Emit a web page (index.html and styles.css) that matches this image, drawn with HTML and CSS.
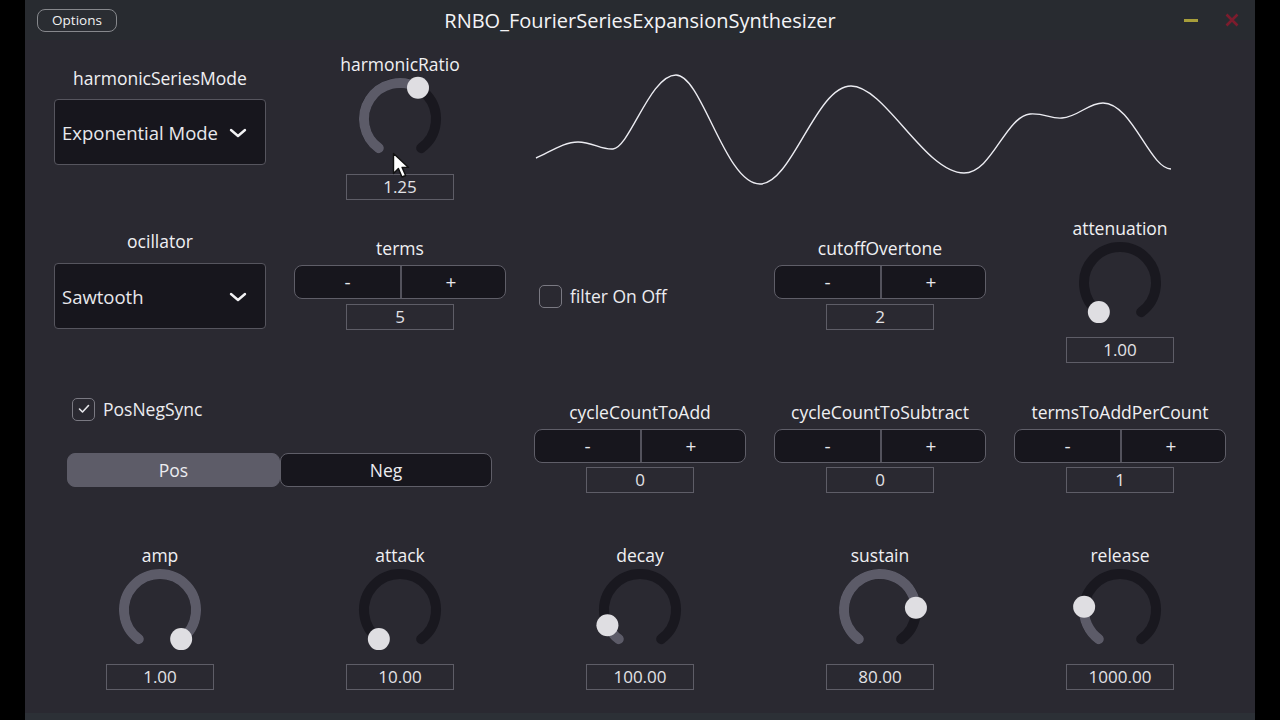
FILE: index.html
```html
<!DOCTYPE html>
<html lang="en">
<head>
  <meta charset="utf-8">
  <title>RNBO_FourierSeriesExpansionSynthesizer</title>
  <link rel="stylesheet" href="styles.css">
</head>
<body>
  <div class="window">
    <div class="titlebar">
      <button class="options">Options</button>
      <div class="title">RNBO_FourierSeriesExpansionSynthesizer</div>
      <div class="winctl">
        <span class="min"></span>
        <svg class="close" width="14" height="14" viewBox="0 0 14 14"><path d="M1.5 1.5 L12.5 12.5 M12.5 1.5 L1.5 12.5" stroke="#7c1c2d" stroke-width="2.6"/></svg>
      </div>
    </div>

    <div class="patch">
      <!-- row 1 -->
      <div class="cell r1-mode">
        <div class="label">harmonicSeriesMode</div>
        <div class="menu">
          <span>Exponential Mode</span>
          <svg width="18" height="10" viewBox="0 0 18 10"><path d="M2 2 L9 8 L16 2" fill="none" stroke="#f2f2f4" stroke-width="2.4" stroke-linecap="round" stroke-linejoin="round"/></svg>
        </div>
      </div>
      <div class="cell r1-knob">
        <div class="label">harmonicRatio</div>
        <svg class="knob" width="84" height="84" viewBox="0 0 84 84">
          <path class="track" d="M20.84 71.12 A36 36 0 1 1 63.16 71.12"/>
          <path class="fill" d="M20.84 71.12 A36 36 0 0 1 60 10.82"/>
          <circle class="thumb" cx="60" cy="10.82" r="11"/>
        </svg>
        <div class="num">1.25</div>
      </div>
      <div class="cell scope">
        <svg width="720" height="170" viewBox="0 0 720 170">
          <path d="M16 118 C30 112 44 102 58 102 C72 102 82 110 93 109 C110 107 130 35 156 35 C182 35 205 144 240 144 C272 144 296 46 331 46 C365 46 405 133 444 133 C472 133 485 77 510 74 C525 73 530 79 542 78 C558 77 568 63 583 63 C612 63 630 129 651 129"
                fill="none" stroke="#ececf2" stroke-width="1.4"/>
        </svg>
      </div>

      <!-- row 2 -->
      <div class="cell r2-menu">
        <div class="label">ocillator</div>
        <div class="menu">
          <span>Sawtooth</span>
          <svg width="18" height="10" viewBox="0 0 18 10"><path d="M2 2 L9 8 L16 2" fill="none" stroke="#f2f2f4" stroke-width="2.4" stroke-linecap="round" stroke-linejoin="round"/></svg>
        </div>
      </div>
      <div class="cell r2-step">
        <div class="label">terms</div>
        <div class="stepper"><span>-</span><span>+</span></div>
        <div class="num">5</div>
      </div>
      <div class="cell r2-toggle">
        <span class="box"></span>
        <span class="toggle-text">filter On Off</span>
      </div>
      <div class="cell r2-step">
        <div class="label">cutoffOvertone</div>
        <div class="stepper"><span>-</span><span>+</span></div>
        <div class="num">2</div>
      </div>
      <div class="cell r2-knob">
        <div class="label">attenuation</div>
        <svg class="knob" width="84" height="84" viewBox="0 0 84 84">
          <path class="track" d="M20.84 71.12 A36 36 0 1 1 63.16 71.12"/>
          <circle class="thumb" cx="20.84" cy="71.12" r="11"/>
        </svg>
        <div class="num">1.00</div>
      </div>

      <!-- row 3 -->
      <div class="cell r3-sync">
        <div class="sync">
          <span class="box checked">
            <svg width="12" height="10" viewBox="0 0 12 10"><path d="M1.5 5 L4.5 8 L10.5 1.5" fill="none" stroke="#e6e6ea" stroke-width="1.6" stroke-linecap="round" stroke-linejoin="round"/></svg>
          </span>
          <span class="toggle-text">PosNegSync</span>
        </div>
        <div class="segment">
          <span class="on">Pos</span>
          <span>Neg</span>
        </div>
      </div>
      <div class="cell r3-step">
        <div class="label">cycleCountToAdd</div>
        <div class="stepper"><span>-</span><span>+</span></div>
        <div class="num">0</div>
      </div>
      <div class="cell r3-step">
        <div class="label">cycleCountToSubtract</div>
        <div class="stepper"><span>-</span><span>+</span></div>
        <div class="num">0</div>
      </div>
      <div class="cell r3-step">
        <div class="label">termsToAddPerCount</div>
        <div class="stepper"><span>-</span><span>+</span></div>
        <div class="num">1</div>
      </div>

      <!-- row 4 : envelope -->
      <div class="cell r4-knob">
        <div class="label">amp</div>
        <svg class="knob" width="84" height="84" viewBox="0 0 84 84">
          <path class="track" d="M20.84 71.12 A36 36 0 1 1 63.16 71.12"/>
          <path class="fill" d="M20.84 71.12 A36 36 0 1 1 63.16 71.12"/>
          <circle class="thumb" cx="63.16" cy="71.12" r="11"/>
        </svg>
        <div class="num">1.00</div>
      </div>
      <div class="cell r4-knob">
        <div class="label">attack</div>
        <svg class="knob" width="84" height="84" viewBox="0 0 84 84">
          <path class="track" d="M20.84 71.12 A36 36 0 1 1 63.16 71.12"/>
          <circle class="thumb" cx="20.84" cy="71.12" r="11"/>
        </svg>
        <div class="num">10.00</div>
      </div>
      <div class="cell r4-knob">
        <div class="label">decay</div>
        <svg class="knob" width="84" height="84" viewBox="0 0 84 84">
          <path class="track" d="M20.84 71.12 A36 36 0 1 1 63.16 71.12"/>
          <path class="fill" d="M20.84 71.12 A36 36 0 0 1 9.43 57.33"/>
          <circle class="thumb" cx="9.43" cy="57.33" r="11"/>
        </svg>
        <div class="num">100.00</div>
      </div>
      <div class="cell r4-knob">
        <div class="label">sustain</div>
        <svg class="knob" width="84" height="84" viewBox="0 0 84 84">
          <path class="track" d="M20.84 71.12 A36 36 0 1 1 63.16 71.12"/>
          <path class="fill" d="M20.84 71.12 A36 36 0 1 1 77.93 39.74"/>
          <circle class="thumb" cx="77.93" cy="39.74" r="11"/>
        </svg>
        <div class="num">80.00</div>
      </div>
      <div class="cell r4-knob">
        <div class="label">release</div>
        <svg class="knob" width="84" height="84" viewBox="0 0 84 84">
          <path class="track" d="M20.84 71.12 A36 36 0 1 1 63.16 71.12"/>
          <path class="fill" d="M20.84 71.12 A36 36 0 0 1 6.14 38.84"/>
          <circle class="thumb" cx="6.14" cy="38.84" r="11"/>
        </svg>
        <div class="num">1000.00</div>
      </div>
    </div>
    <div class="footer"></div>
  </div>

  <!-- mouse pointer over the harmonicRatio knob -->
  <svg class="pointer" width="18" height="28" viewBox="0 0 18 28"><path d="M1.5 1.5 L1.5 21.5 L6.4 16.6 L10 25 L13.6 23.5 L10.1 15.4 L16.5 15.4 Z" fill="#ffffff" stroke="#111" stroke-width="1.4" stroke-linejoin="round"/></svg>
</body>
</html>
```

FILE: styles.css
```css
body {
  margin: 0;
  background: #000000;
  font-family: "Open Sans", Lato, "Liberation Sans", sans-serif;
  color: #ededf1;
}
.window {
  position: relative;
  margin-left: 25px;
  width: 1230px;
  height: 720px;
  background: #2a2931;
  display: flex;
  flex-direction: column;
}

/* title bar */
.titlebar {
  height: 40px;
  flex: none;
  background: #282b30;
  display: grid;
  grid-template-columns: 1fr auto 1fr;
  align-items: center;
}
.options {
  justify-self: start;
  margin-left: 12px;
  width: 80px;
  height: 23px;
  padding: 0;
  border: 1px solid #86888c;
  border-radius: 8px;
  background: #2a2d32;
  color: #f2f2f2;
  font-family: "Open Sans", Lato, sans-serif;
  font-size: 13.5px;
  font-weight: 500;
}
.title {
  font-size: 20px;
  font-weight: 500;
  color: #f4f4f6;
}
.winctl {
  justify-self: end;
  margin-right: 16px;
  display: flex;
  align-items: center;
  gap: 27px;
}
.winctl .min {
  display: block;
  width: 14px;
  height: 3px;
  margin-top: 1px;
  background: #a79e3a;
}

/* main grid */
.patch {
  flex: 1;
  display: grid;
  grid-template-columns: repeat(5, 240px);
  grid-template-rows: 170px 165px 155px 1fr;
  padding-left: 15px;
}
.cell {
  display: flex;
  flex-direction: column;
  align-items: center;
}
.label {
  font-size: 17.5px;
  font-weight: 500;
  line-height: 20px;
  color: #f0f0f3;
  white-space: nowrap;
}
.num {
  box-sizing: border-box;
  width: 108px;
  height: 26px;
  border: 1px solid #5e5d67;
  font-size: 17px;
  line-height: 24px;
  text-align: center;
  color: #e2e2e6;
}
.knob {
  margin-top: 3px;
  display: block;
  overflow: visible;
}
.knob + .num {
  margin-top: 12px;
}
.knob .track, .knob .fill {
  fill: none;
  stroke-width: 10;
  stroke-linecap: round;
}
.knob .track { stroke: #19181f; }
.knob .fill { stroke: #5c5b68; }
.knob .thumb { fill: #dfdee2; }

.menu {
  box-sizing: border-box;
  width: 212px;
  height: 66px;
  margin-top: 12px;
  padding: 0 18px 0 7px;
  background: #17161d;
  border: 1px solid #56555e;
  border-radius: 4px;
  display: flex;
  align-items: center;
  justify-content: space-between;
  font-size: 18.5px;
  color: #e8e8ec;
}
.menu svg { margin-top: 2px; }

.stepper {
  box-sizing: border-box;
  width: 212px;
  height: 34px;
  margin-top: 7px;
  border: 1px solid #5f5e68;
  border-radius: 8px;
  background: #17161d;
  display: grid;
  grid-template-columns: 1fr 1fr;
  overflow: hidden;
}
.stepper span {
  display: flex;
  align-items: center;
  justify-content: center;
  font-size: 19px;
  color: #e8e8ec;
}
.stepper span + span {
  border-left: 2px solid #53525c;
  padding-right: 5px;
}
.stepper + .num {
  margin-top: 4px;
}

.box {
  box-sizing: border-box;
  width: 23px;
  height: 23px;
  border: 1.5px solid #7a7982;
  border-radius: 5px;
  display: flex;
  align-items: center;
  justify-content: center;
}
.toggle-text {
  font-size: 17.5px;
  color: #ececf0;
}

/* per-row placement */
.r1-mode { padding-top: 28px; }
.r1-mode .menu { margin-top: 11px; }
.r1-knob { padding-top: 14px; }
.r1-knob .knob + .num { margin-top: 13px; }
.scope { grid-column: 3 / span 3; align-items: flex-start; }
.scope svg { display: block; }

.r2-menu { padding-top: 21px; }
.r2-step { padding-top: 28px; }
.r2-step .num { margin-top: 5px; }
.r2-toggle {
  flex-direction: row;
  align-items: flex-start;
  padding: 75px 0 0 19px;
  gap: 8px;
}
.r2-toggle .toggle-text { line-height: 23px; }
.r2-knob { padding-top: 8px; }

.r3-sync {
  grid-column: 1 / span 2;
  align-items: flex-start;
  padding-top: 22px;
}
.sync {
  display: flex;
  align-items: center;
  gap: 8px;
  margin-left: 32px;
}
.segment {
  margin: 32px 0 0 27px;
  width: 425px;
  height: 34px;
  display: grid;
  grid-template-columns: 213px 212px;
}
.segment span {
  box-sizing: border-box;
  display: flex;
  align-items: center;
  justify-content: center;
  font-size: 17.5px;
  font-weight: 500;
  color: #ececf0;
  background: #17161d;
  border: 1px solid #5f5e68;
  border-radius: 8px;
}
.segment span.on {
  background: #5d5c68;
  border-color: #5d5c68;
}
.r3-step { padding-top: 27px; }

.r4-knob { padding-top: 15px; }

.footer {
  height: 7px;
  flex: none;
  background: #2c3036;
}

/* cursor captured in the screenshot */
.pointer {
  position: absolute;
  left: 392px;
  top: 152px;
}
```
